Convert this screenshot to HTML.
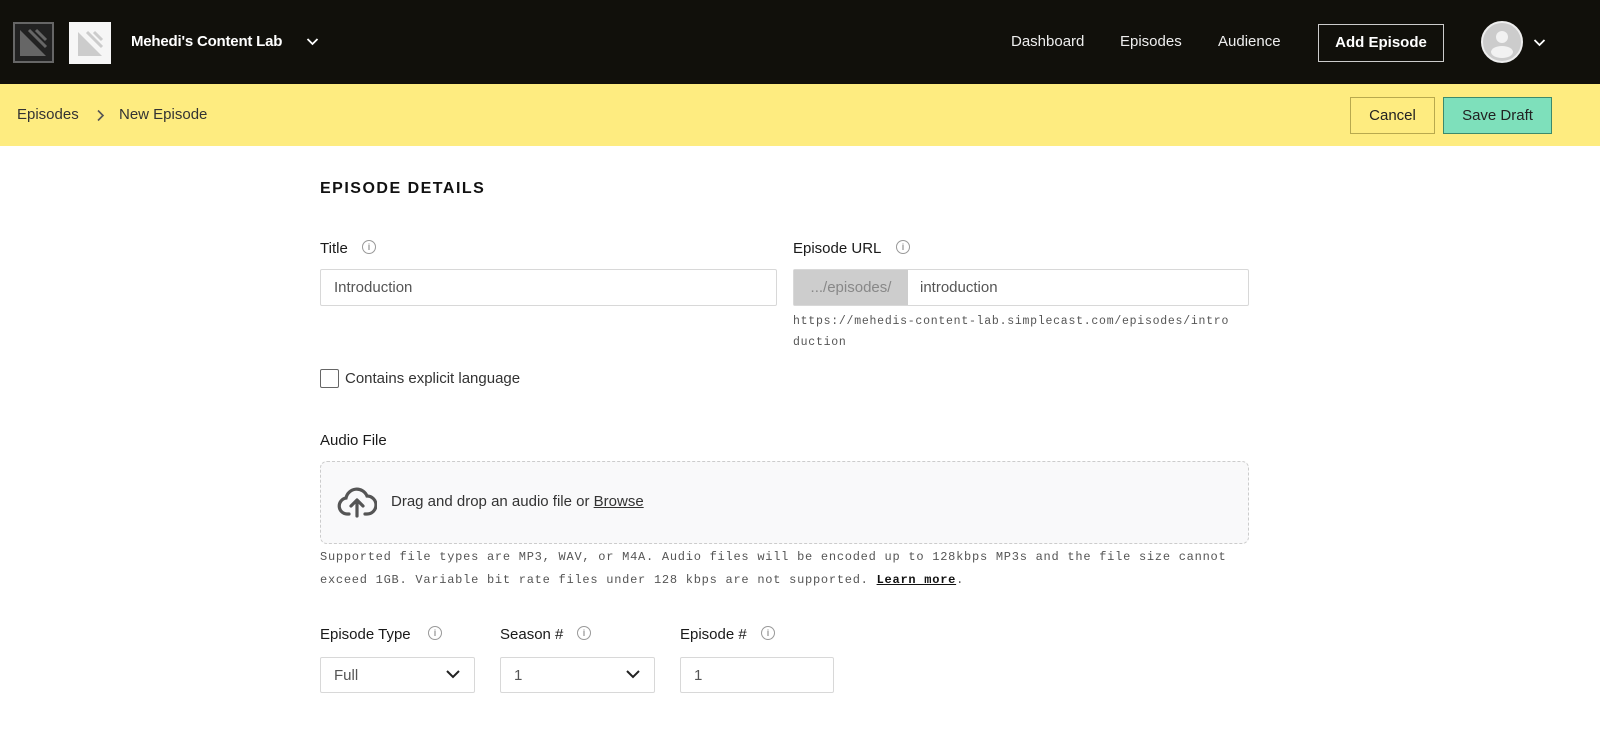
<!DOCTYPE html>
<html><head><meta charset="utf-8"><style>
*{box-sizing:border-box;margin:0;padding:0}
body{width:1600px;height:732px;overflow:hidden;background:#fff;font-family:"Liberation Sans",sans-serif;color:#222;position:relative}
.a{position:absolute}
.hdr{left:0;top:0;width:1600px;height:84px;background:#11100b}
.yb{left:0;top:84px;width:1600px;height:62px;background:#feec80}
.nav{color:#eee;font-size:15px;top:33px}
.lbl{font-size:15px;color:#1a1a1a}
.inp{border:1px solid #d8d8d8;border-radius:2px;background:#fff;font-size:15px;color:#555;padding-left:13px;display:flex;align-items:center}
.mono{font-family:"Liberation Mono",monospace;font-size:11.5px;color:#555;letter-spacing:.75px}
.info{width:14px;height:14px;border:1.3px solid #999;border-radius:50%;font-size:9px;color:#999;text-align:center;line-height:12px;font-weight:bold}
</style></head><body>
<div class="a hdr"></div>
<svg class="a" style="left:13px;top:22px" width="41" height="41" viewBox="0 0 41 41"><rect x="1" y="1" width="39" height="39" fill="#222" stroke="#666" stroke-width="2"/><polygon points="7,8 33,34 7,34" fill="#666"/><line x1="16" y1="8" x2="33" y2="25" stroke="#666" stroke-width="3"/><line x1="23" y1="8" x2="33" y2="18" stroke="#666" stroke-width="3"/></svg>
<svg class="a" style="left:69px;top:22px" width="42" height="42" viewBox="0 0 42 42"><rect width="42" height="42" fill="#f6f6f6"/><polygon points="9,10 33,34 9,34" fill="#ccc"/><line x1="18" y1="10" x2="33" y2="25" stroke="#ccc" stroke-width="3"/><line x1="25" y1="10" x2="33" y2="18" stroke="#ccc" stroke-width="3"/></svg>
<div class="a" style="left:131px;top:33px;color:#fff;font-size:15px;font-weight:bold;letter-spacing:-.2px">Mehedi's Content Lab</div>
<svg class="a" style="left:306px;top:37px" width="13" height="9" viewBox="0 0 13 9"><path d="M1.5 2l5 5 5-5" stroke="#fff" stroke-width="1.8" fill="none"/></svg>
<div class="a nav" style="left:1011px">Dashboard</div>
<div class="a nav" style="left:1120px">Episodes</div>
<div class="a nav" style="left:1218px">Audience</div>
<div class="a" style="left:1318px;top:24px;width:126px;height:38px;border:1.5px solid #ccc;color:#fff;font-weight:bold;font-size:15px;text-align:center;line-height:35px">Add Episode</div>
<svg class="a" style="left:1481px;top:21px" width="42" height="42" viewBox="0 0 42 42"><circle cx="21" cy="21" r="20" fill="#ccc" stroke="#eee" stroke-width="2"/><circle cx="21" cy="16" r="6" fill="#f2f2f2"/><ellipse cx="21" cy="31" rx="11" ry="6" fill="#f2f2f2"/></svg>
<svg class="a" style="left:1533px;top:38px" width="13" height="9" viewBox="0 0 13 9"><path d="M1.5 2l5 5 5-5" stroke="#fff" stroke-width="1.8" fill="none"/></svg>
<div class="a yb"></div>
<div class="a" style="left:17px;top:106px;font-size:15px;color:#333">Episodes</div>
<svg class="a" style="left:96px;top:109px" width="9" height="13" viewBox="0 0 9 13"><path d="M2 1.5l5 5-5 5" stroke="#555" stroke-width="1.6" fill="none"/></svg>
<div class="a" style="left:119px;top:106px;font-size:15px;color:#333">New Episode</div>
<div class="a" style="left:1350px;top:97px;width:85px;height:37px;border:1px solid #b8a94e;font-size:15px;text-align:center;line-height:35px;color:#222">Cancel</div>
<div class="a" style="left:1443px;top:97px;width:109px;height:37px;border:1px solid #3c8a6c;background:#7ee0bb;font-size:15px;text-align:center;line-height:35px;color:#222">Save Draft</div>

<div class="a" style="left:320px;top:180px;font-size:16px;font-weight:bold;letter-spacing:1.5px;color:#111">EPISODE DETAILS</div>
<div class="a lbl" style="left:320px;top:240px">Title</div><div class="a info" style="left:362px;top:240px">i</div>
<div class="a inp" style="left:320px;top:269px;width:457px;height:37px">Introduction</div>
<div class="a lbl" style="left:793px;top:240px">Episode URL</div><div class="a info" style="left:896px;top:240px">i</div>
<div class="a inp" style="left:793px;top:269px;width:456px;height:37px;padding-left:0"><div style="width:114px;height:100%;background:#cdcdcd;color:#888;display:flex;align-items:center;justify-content:center">.../episodes/</div><div style="padding-left:12px">introduction</div></div>
<div class="a mono" style="left:793px;top:311px;line-height:21px">https://mehedis-content-lab.simplecast.com/episodes/intro<br>duction</div>
<div class="a" style="left:320px;top:369px;width:19px;height:19px;border:1.5px solid #666;border-radius:2px"></div>
<div class="a lbl" style="left:345px;top:370px;color:#333">Contains explicit language</div>
<div class="a lbl" style="left:320px;top:432px">Audio File</div>
<div class="a" style="left:320px;top:461px;width:929px;height:83px;border:1px dashed #ccc;border-radius:7px;background:#f9f9fa"></div>
<svg class="a" style="left:337px;top:486px" width="40" height="32" viewBox="0 0 40 32"><path d="M12 28H10a8 8 0 0 1-1-15.9A11 11 0 0 1 30 10a8 8 0 0 1 0 18h-2" stroke="#555" stroke-width="3.2" fill="none" stroke-linecap="round"/><path d="M20 30V15M14 20l6-6 6 6" stroke="#555" stroke-width="3.2" fill="none" stroke-linecap="round" stroke-linejoin="round"/></svg>
<div class="a" style="left:391px;top:493px;font-size:15px;color:#333">Drag and drop an audio file or <u>Browse</u></div>
<div class="a mono" style="left:320px;top:546px;line-height:23px;font-size:12px;letter-spacing:.75px">Supported file types are MP3, WAV, or M4A. Audio files will be encoded up to 128kbps MP3s and the file size cannot<br>exceed 1GB. Variable bit rate files under 128 kbps are not supported. <b style="color:#111;text-decoration:underline">Learn more</b>.</div>
<div class="a lbl" style="left:320px;top:626px">Episode Type</div><div class="a info" style="left:428px;top:626px">i</div>
<div class="a lbl" style="left:500px;top:626px">Season #</div><div class="a info" style="left:577px;top:626px">i</div>
<div class="a lbl" style="left:680px;top:626px">Episode #</div><div class="a info" style="left:761px;top:626px">i</div>
<div class="a inp" style="left:320px;top:657px;width:155px;height:36px">Full</div>
<svg class="a" style="left:445px;top:669px" width="16" height="11" viewBox="0 0 16 11"><path d="M2 2l6 6 6-6" stroke="#222" stroke-width="2" fill="none"/></svg>
<div class="a inp" style="left:500px;top:657px;width:155px;height:36px">1</div>
<svg class="a" style="left:625px;top:669px" width="16" height="11" viewBox="0 0 16 11"><path d="M2 2l6 6 6-6" stroke="#222" stroke-width="2" fill="none"/></svg>
<div class="a inp" style="left:680px;top:657px;width:154px;height:36px">1</div>
</body></html>
